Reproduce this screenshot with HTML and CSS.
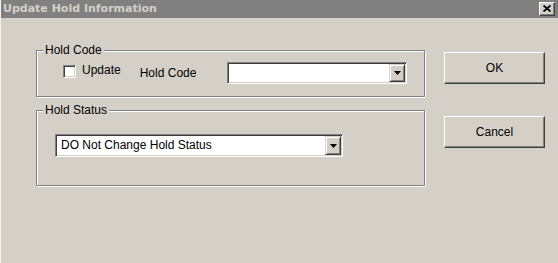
FILE: index.html
```html
<!DOCTYPE html>
<html lang="en">
<head>
    <meta charset="UTF-8">
    <title>Update Hold Information</title>
    <link rel="stylesheet" href="styles.css">
</head>
<body>
    <div class="window">
        <div class="titlebar">
            <span class="title">Update Hold Information</span>
            <div class="close">
                <svg width="8" height="7" viewBox="0 0 8 7">
                    <path d="M0.5 0.5 L7.5 6.5 M7.5 0.5 L0.5 6.5" stroke="#000" stroke-width="1.8" fill="none"/>
                </svg>
            </div>
        </div>

        <div class="content">
            <div class="groups">
                <fieldset class="group">
                    <legend>Hold Code</legend>
                    <div class="code-row">
                        <span class="check"></span>
                        <span class="check-label">Update</span>
                        <span class="field-label">Hold Code</span>
                        <div class="combo combo-code">
                            <span class="combo-text"></span>
                            <span class="combo-btn">
                                <svg width="7" height="4" viewBox="0 0 7 4"><polygon points="0,0 7,0 3.5,4" fill="#000"/></svg>
                            </span>
                        </div>
                    </div>
                </fieldset>

                <fieldset class="group group-status">
                    <legend>Hold Status</legend>
                    <div class="status-row">
                        <div class="combo combo-status">
                            <span class="combo-text">DO Not Change Hold Status</span>
                            <span class="combo-btn">
                                <svg width="7" height="4" viewBox="0 0 7 4"><polygon points="0,0 7,0 3.5,4" fill="#000"/></svg>
                            </span>
                        </div>
                    </div>
                </fieldset>
            </div>

            <div class="buttons">
                <button class="btn btn-ok">OK</button>
                <button class="btn btn-cancel">Cancel</button>
            </div>
        </div>
    </div>
</body>
</html>
```

FILE: styles.css
```css
html, body {
    margin: 0;
    padding: 0;
    overflow: hidden;
}
body {
    font-family: "Liberation Sans", Arial, sans-serif;
    font-size: 12px;
    color: #000;
}
.window {
    box-sizing: border-box;
    width: 558px;
    height: 263px;
    background-color: #d4d0c8;
    border-left: 1px solid #f4f3f0;
}
.titlebar {
    height: 18px;
    background-color: #808080;
    display: flex;
    align-items: center;
    justify-content: space-between;
    padding: 0 3px 0 2px;
}
.title {
    font-family: "DejaVu Sans", Verdana, sans-serif;
    font-weight: bold;
    font-size: 11px;
    color: #d4d0c8;
    line-height: 18px;
}
.close {
    box-sizing: border-box;
    width: 16px;
    height: 14px;
    background-color: #d4d0c8;
    border: 1px solid;
    border-color: #fff #404040 #404040 #fff;
    box-shadow: inset -1px -1px 0 #808080;
    display: flex;
    align-items: center;
    justify-content: center;
    padding-bottom: 1px;
}
.content {
    display: flex;
    padding-left: 35px;
}
.groups {
    width: 389px;
    padding-top: 25px;
}
.group {
    margin: 0;
    padding: 0;
    min-width: 0;
    border: 1px solid #808080;
    box-shadow: inset 1px 1px 0 #fff, 1px 1px 0 #fff;
}
.group legend {
    margin-left: 6px;
    padding: 0 2px;
    line-height: 14px;
    background-color: #d4d0c8;
}
.group-status {
    margin-top: 6px;
}
.code-row {
    display: flex;
    align-items: flex-start;
    height: 22px;
    padding: 5px 0 12px 26px;
}
.status-row {
    padding: 17px 0 28px 18px;
}
.check {
    box-sizing: border-box;
    width: 13px;
    height: 13px;
    margin-top: 3px;
    background-color: #fff;
    border: 1px solid;
    border-color: #808080 #fff #fff #808080;
    box-shadow: inset 1px 1px 0 #404040, inset -1px -1px 0 #d4d0c8;
}
.check-label {
    margin: 1px 0 0 6px;
    line-height: 14px;
}
.field-label {
    margin: 4px 0 0 19px;
    line-height: 14px;
}
.combo {
    box-sizing: border-box;
    display: flex;
    background-color: #fff;
    border: 1px solid;
    border-color: #808080 #fff #fff #808080;
    box-shadow: inset 1px 1px 0 #404040, inset -1px -1px 0 #d4d0c8;
    padding: 1px;
}
.combo-code {
    width: 180px;
    height: 22px;
    margin-left: 31px;
}
.combo-status {
    width: 288px;
    height: 23px;
}
.combo-text {
    flex: 1;
    padding-left: 4px;
    line-height: 19px;
    white-space: nowrap;
}
.combo-btn {
    box-sizing: border-box;
    width: 16px;
    background-color: #d4d0c8;
    border: 1px solid;
    border-color: #d4d0c8 #404040 #404040 #d4d0c8;
    box-shadow: inset 1px 1px 0 #fff, inset -1px -1px 0 #808080;
    display: flex;
    align-items: center;
    justify-content: center;
}
.buttons {
    display: flex;
    flex-direction: column;
    margin-left: 19px;
    padding-top: 34px;
}
.btn {
    box-sizing: border-box;
    width: 101px;
    height: 32px;
    padding: 0;
    font-family: "Liberation Sans", Arial, sans-serif;
    font-size: 12px;
    color: #000;
    background-color: #d4d0c8;
    border: 1px solid;
    border-color: #fff #404040 #404040 #fff;
    box-shadow: inset -1px -1px 0 #808080;
}
.btn-cancel {
    margin-top: 32px;
}
```
